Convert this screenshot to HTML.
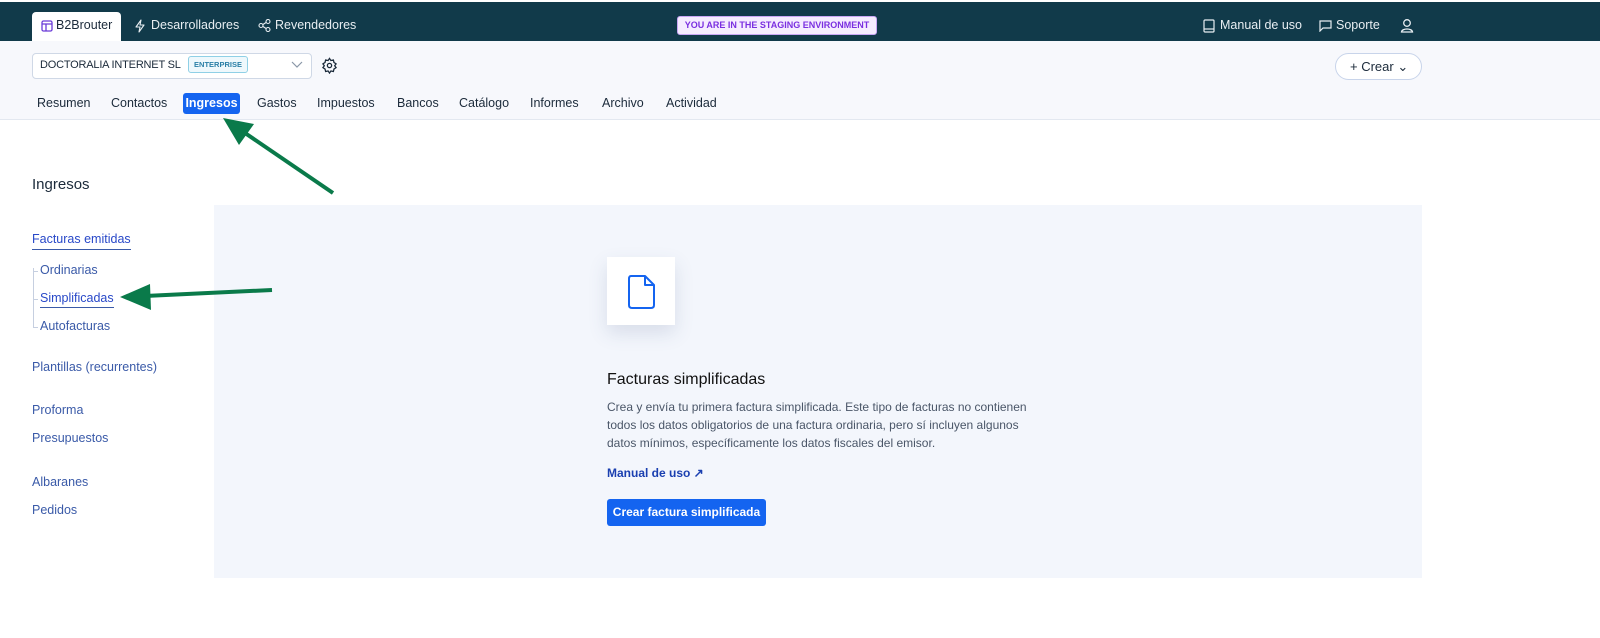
<!DOCTYPE html>
<html><head><meta charset="utf-8"><style>
*{box-sizing:border-box;margin:0;padding:0}
body{width:1600px;height:638px;background:#fff;font-family:"Liberation Sans",sans-serif;position:relative;overflow:hidden;color:#1b2a3a}
.a{position:absolute;white-space:nowrap}
.top{position:absolute;left:0;top:2px;width:1600px;height:39px;background:#113a4a}
.tw{color:#e8eef2;font-size:12.5px;top:18px;line-height:15px}
.sub{position:absolute;left:0;top:41px;width:1600px;height:79px;background:#f7f8fc;border-bottom:1px solid #e3e8f0}
.nav{font-size:12.5px;top:96px;color:#1b2a3a}
.side{font-size:12.5px;color:#3a5aa8}
</style></head><body>
<div class="top"></div>
<div class="a" style="left:32px;top:12px;width:89px;height:30px;background:#fff;border-radius:4px 4px 0 0"></div>
<svg class="a" style="left:41px;top:20px" width="12" height="12" viewBox="0 0 12 12"><rect x="1" y="1" width="10" height="10" rx="1.5" fill="none" stroke="#6a3bd8" stroke-width="1.3"/><path d="M1 4H11M5 4V11" stroke="#6a3bd8" stroke-width="1.3"/></svg>
<div class="a" style="left:56px;top:18px;font-size:12.5px;color:#1b2a3a;line-height:15px">B2Brouter</div>
<svg class="a" style="left:134px;top:19px" width="12" height="14" viewBox="0 0 12 14"><path d="M7 1L2 8H6L5 13L10 6H6Z" fill="none" stroke="#e8eef2" stroke-width="1.1" stroke-linejoin="round"/></svg>
<div class="a tw" style="left:151px">Desarrolladores</div>
<svg class="a" style="left:258px;top:19px" width="13" height="13" viewBox="0 0 13 13" fill="none" stroke="#e8eef2" stroke-width="1.1"><circle cx="3" cy="6.5" r="2"/><circle cx="10" cy="2.5" r="2"/><circle cx="10" cy="10.5" r="2"/><path d="M5 5.5L8 3.5M5 7.5L8 9.5"/></svg>
<div class="a tw" style="left:275px">Revendedores</div>
<div class="a" style="left:677px;top:16px;width:200px;height:19px;background:#f5ecff;border:1px solid #c9a6f5;border-radius:3px;color:#7a2fe0;font-size:9px;font-weight:bold;text-align:center;line-height:17px">YOU ARE IN THE STAGING ENVIRONMENT</div>
<svg class="a" style="left:1203px;top:19px" width="12" height="14" viewBox="0 0 12 14"><rect x="1" y="1" width="10" height="12" rx="1" fill="none" stroke="#e8eef2" stroke-width="1.2"/><path d="M1 10H11" stroke="#e8eef2" stroke-width="1.2"/></svg>
<div class="a tw" style="left:1220px">Manual de uso</div>
<svg class="a" style="left:1319px;top:20px" width="13" height="12" viewBox="0 0 13 12"><path d="M1 1H12V8H4L1 11Z" fill="none" stroke="#e8eef2" stroke-width="1.2"/></svg>
<div class="a tw" style="left:1336px">Soporte</div>
<svg class="a" style="left:1400px;top:18px" width="14" height="15" viewBox="0 0 14 15"><circle cx="7" cy="5" r="3.3" fill="none" stroke="#e8eef2" stroke-width="1.3"/><path d="M1.5 14C2 10 12 10 12.5 14Z" fill="none" stroke="#e8eef2" stroke-width="1.3"/></svg>
<div class="sub"></div>
<div class="a" style="left:32px;top:53px;width:280px;height:26px;background:#fff;border:1px solid #cfd8e6;border-radius:4px"></div>
<div class="a" style="left:40px;top:59px;font-size:11px;color:#1b2a3a;letter-spacing:-0.2px">DOCTORALIA INTERNET SL</div>
<div class="a" style="left:188px;top:56px;width:60px;height:17px;background:#eef8fc;border:1px solid #8fd0e6;border-radius:3px;font-size:7.5px;font-weight:bold;color:#2a7fa6;text-align:center;line-height:15px">ENTERPRISE</div>
<svg class="a" style="left:291px;top:61px" width="12" height="8" viewBox="0 0 12 8"><path d="M1 1L6 6L11 1" fill="none" stroke="#8a97a8" stroke-width="1.2"/></svg>
<svg class="a" style="left:321px;top:57px" width="17" height="17" viewBox="0 0 24 24" fill="none" stroke="#1b2a3a" stroke-width="1.8"><circle cx="12" cy="12" r="3"/><path d="M12 2l2 3 3.5-.8.8 3.5 3 2-2 2.6 2 2.7-3 2-.8 3.5-3.5-.8-2 3-2-3-3.5.8-.8-3.5-3-2 2-2.7-2-2.6 3-2 .8-3.5 3.5.8z"/></svg>
<div class="a" style="left:1335px;top:53px;width:87px;height:27px;background:#fff;border:1px solid #c8d4ea;border-radius:14px;font-size:13px;color:#1b2a3a;line-height:25px;padding-left:14px">+ Crear ⌄</div>
<div class="a nav" style="left:37px">Resumen</div>
<div class="a nav" style="left:111px">Contactos</div>
<div class="a" style="left:183px;top:93px;width:57px;height:21px;background:#1464f0;border-radius:3px;color:#fff;font-size:12.5px;font-weight:bold;text-align:center;line-height:21px">Ingresos</div>
<div class="a nav" style="left:257px">Gastos</div>
<div class="a nav" style="left:317px">Impuestos</div>
<div class="a nav" style="left:397px">Bancos</div>
<div class="a nav" style="left:459px">Catálogo</div>
<div class="a nav" style="left:530px">Informes</div>
<div class="a nav" style="left:602px">Archivo</div>
<div class="a nav" style="left:666px">Actividad</div>
<div class="a" style="left:32px;top:176px;font-size:15px;color:#1b2a3a">Ingresos</div>
<div class="a side" style="left:32px;top:232px;border-bottom:1px solid #3a5aa8;padding-bottom:3px;color:#2848c8">Facturas emitidas</div>
<div class="a" style="left:33px;top:268px;width:1px;height:60px;background:#c6cfe0"></div>
<div class="a" style="left:33px;top:271px;width:5px;height:1px;background:#c6cfe0"></div>
<div class="a" style="left:33px;top:299px;width:5px;height:1px;background:#c6cfe0"></div>
<div class="a" style="left:33px;top:327px;width:5px;height:1px;background:#c6cfe0"></div>
<div class="a side" style="left:40px;top:263px">Ordinarias</div>
<div class="a side" style="left:40px;top:291px;border-bottom:1px solid #3a5aa8;padding-bottom:2px;color:#2848c8">Simplificadas</div>
<div class="a side" style="left:40px;top:319px">Autofacturas</div>
<div class="a side" style="left:32px;top:360px">Plantillas (recurrentes)</div>
<div class="a side" style="left:32px;top:403px">Proforma</div>
<div class="a side" style="left:32px;top:431px">Presupuestos</div>
<div class="a side" style="left:32px;top:475px">Albaranes</div>
<div class="a side" style="left:32px;top:503px">Pedidos</div>
<div class="a" style="left:214px;top:205px;width:1208px;height:373px;background:#f3f6fc"></div>
<div class="a" style="left:607px;top:257px;width:68px;height:68px;background:#fff;box-shadow:0 8px 18px rgba(60,80,130,.15)"></div>
<svg class="a" style="left:627px;top:274px" width="29" height="36" viewBox="0 0 29 36"><path d="M4 2H18L27 11V31Q27 34 24 34H5Q2 34 2 31V5Q2 2 4 2Z M18 2V11H27" fill="none" stroke="#1464f0" stroke-width="2" stroke-linejoin="round"/></svg>
<div class="a" style="left:607px;top:371px;font-size:16px;color:#111">Facturas simplificadas</div>
<div class="a" style="left:607px;top:398px;font-size:12px;line-height:18px;color:#4a5668">Crea y envía tu primera factura simplificada. Este tipo de facturas no contienen<br>todos los datos obligatorios de una factura ordinaria, pero sí incluyen algunos<br>datos mínimos, específicamente los datos fiscales del emisor.</div>
<div class="a" style="left:607px;top:466px;font-size:12px;color:#1a3fb0;font-weight:bold">Manual de uso ↗</div>
<div class="a" style="left:607px;top:499px;width:159px;height:27px;background:#1464f0;border-radius:3px;color:#fff;font-size:12px;font-weight:bold;text-align:center;line-height:27px">Crear factura simplificada</div>
<svg class="a" style="left:0;top:0" width="1600" height="638"><g stroke="#0a7a4a" stroke-width="4" fill="#0a7a4a"><line x1="333" y1="193" x2="245" y2="133"/><path d="M223 118L254 124L239 145Z" stroke="none"/><line x1="272" y1="290" x2="145" y2="296"/><path d="M120 297L150 284L151 310Z" stroke="none"/></g></svg>
</body></html>
